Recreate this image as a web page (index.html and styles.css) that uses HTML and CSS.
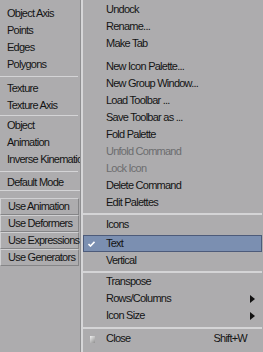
FILE: index.html
```html
<!DOCTYPE html>
<html>
<head>
<meta charset="utf-8">
<link rel="stylesheet" href="styles.css">
</head>
<body>
<div class="app">
  <div class="panel">
    <div class="group g1">
      <div class="item">Object Axis</div>
      <div class="item">Points</div>
      <div class="item">Edges</div>
      <div class="item">Polygons</div>
    </div>
    <div class="sep s1"></div>
    <div class="group">
      <div class="item">Texture</div>
      <div class="item">Texture Axis</div>
    </div>
    <div class="sep s2"></div>
    <div class="group">
      <div class="item">Object</div>
      <div class="item">Animation</div>
      <div class="item">Inverse Kinematics</div>
    </div>
    <div class="sep s3"></div>
    <div class="group">
      <div class="item mode">Default Mode</div>
    </div>
    <div class="box"></div>
    <div class="btn">Use Animation</div>
    <div class="btn">Use Deformers</div>
    <div class="btn">Use Expressions</div>
    <div class="btn">Use Generators</div>
  </div>
  <div class="edge"></div>
  <div class="menu">
    <div class="mi">Undock</div>
    <div class="mi">Rename...</div>
    <div class="mi">Make Tab</div>
    <div class="gap"></div>
    <div class="mi">New Icon Palette...</div>
    <div class="mi">New Group Window...</div>
    <div class="mi">Load Toolbar ...</div>
    <div class="mi">Save Toolbar as ...</div>
    <div class="mi">Fold Palette</div>
    <div class="mi off">Unfold Command</div>
    <div class="mi off">Lock Icon</div>
    <div class="mi">Delete Command</div>
    <div class="mi">Edit Palettes</div>
    <div class="msep m1"></div>
    <div class="mi">Icons</div>
    <div class="mi sel"><svg class="check" width="7" height="6" viewBox="0 0 7 6"><path d="M0.5 3 L2.5 5 L6.5 0.8" fill="none" stroke="#ffffff" stroke-width="1.6"/></svg>Text</div>
    <div class="mi">Vertical</div>
    <div class="msep m2"></div>
    <div class="mi">Transpose</div>
    <div class="mi sub">Rows/Columns<span class="arrow"></span></div>
    <div class="mi sub">Icon Size<span class="arrow"></span></div>
    <div class="msep m3"></div>
    <div class="mi"><span class="ico"></span>Close<span class="key">Shift+W</span></div>
  </div>
</div>
</body>
</html>
```

FILE: styles.css
```css
html, body {
  margin: 0;
  padding: 0;
}
body {
  width: 263px;
  height: 352px;
  overflow: hidden;
  background: #adacae;
  font-family: "Liberation Sans", Arial, sans-serif;
  font-size: 11px;
  letter-spacing: -0.75px;
  color: #141414;
}
.app {
  display: flex;
  height: 352px;
}
.panel {
  width: 80px;
  flex: none;
  display: flex;
  flex-direction: column;
  overflow: hidden;
}
.g1 {
  padding-top: 5px;
}
.item {
  height: 17px;
  line-height: 17px;
  padding-left: 7px;
  white-space: nowrap;
}
.item.mode {
  height: 16px;
}
.sep {
  height: 1px;
  background: #d4d4d6;
  margin-right: 2px;
}
.s1 {
  margin-top: 3px;
  margin-bottom: 3px;
}
.s2 {
  margin-top: 1px;
  margin-bottom: 1px;
}
.s3 {
  margin-top: 3px;
  margin-bottom: 2px;
}
.box {
  height: 7px;
  border-top: 1px solid #d4d4d6;
}
.btn {
  height: 15px;
  line-height: 15px;
  padding-left: 7px;
  white-space: nowrap;
  border-top: 1px solid #d0d0d2;
  border-left: 1px solid #d0d0d2;
  border-bottom: 1px solid #858587;
  border-right: 1px solid #858587;
  margin-right: 1px;
}
.edge {
  width: 3px;
  flex: none;
  background: linear-gradient(to right, #8f8f91 0, #8f8f91 1px, #d6d6d8 1px);
}
.menu {
  flex: 1;
  display: flex;
  flex-direction: column;
  padding-top: 1px;
}
.mi {
  position: relative;
  height: 17px;
  line-height: 17px;
  padding-left: 23px;
  white-space: nowrap;
  display: flex;
  align-items: center;
}
.mi.off {
  color: #6c6c6e;
}
.gap {
  height: 6px;
}
.msep {
  height: 2px;
  background: #d4d4d6;
  flex: none;
  margin-right: 1px;
}
.m1 {
  margin-top: 2px;
  margin-bottom: 1px;
}
.m2 {
  margin-top: 2px;
}
.m3 {
  margin-top: 3px;
  margin-bottom: 1px;
}
.mi.sel {
  background: #7b8fb1;
  box-shadow: inset 0 0 0 1px #4d5b7a;
  margin-top: 2px;
  margin-right: 1px;
}
.check {
  position: absolute;
  left: 5px;
  top: 6px;
}
.arrow {
  margin-left: auto;
  margin-right: 8px;
  width: 0;
  height: 0;
  border-top: 4px solid transparent;
  border-bottom: 4px solid transparent;
  border-left: 5px solid #111;
}
.ico {
  position: absolute;
  left: 7px;
  top: 6px;
  width: 5px;
  height: 7px;
  background: linear-gradient(135deg, #f0f0f0, #909090);
}
.key {
  margin-left: auto;
  margin-right: 16px;
}
```
